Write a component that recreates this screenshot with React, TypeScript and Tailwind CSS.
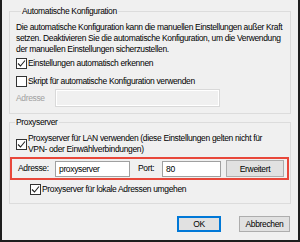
import React from 'react';

const Check: React.FC<{ checked?: boolean }> = ({ checked }) => (
    <span className="w-[11px] h-[11px] border border-[#333333] bg-white flex items-center justify-center shrink-0">
        {checked && (
            <svg width="9" height="9" viewBox="0 0 9 9">
                <path d="M1 4.5 L3.5 7 L8 1.5" fill="none" stroke="#222" strokeWidth="1.1" />
            </svg>
        )}
    </span>
);

const GroupBox: React.FC<{ title: string; className?: string; children: React.ReactNode }> = ({ title, className, children }) => (
    <fieldset className={`border border-[#dcdcdc] ${className ?? ''}`}>
        <legend className="ml-[5px] px-[1px] leading-[11px]">{title}</legend>
        {children}
    </fieldset>
);

const WinButton: React.FC<{ label: string; isDefault?: boolean; className?: string }> = ({ label, isDefault, className }) => (
    <button
        className={`h-[16px] bg-[#e1e1e1] border leading-[14px] text-center ${
            isDefault ? 'border-[#0078d7] shadow-[inset_0_0_0_1px_#0078d7]' : 'border-[#adadad]'
        } ${className ?? ''}`}
    >
        {label}
    </button>
);

export default function App() {
    return (
        <div className="w-[300px] h-[242px] bg-[#f0f0f0] border-l-2 border-r-2 border-b-2 border-[#1e1e1e] font-['Liberation_Sans',Arial,sans-serif] text-[8.5px] tracking-[-0.35px] text-black whitespace-nowrap pl-[7px] pr-[7px] pt-[6px] flex flex-col">
            <GroupBox title="Automatische Konfiguration" className="pl-[6px] pb-[6px]">
                <p className="mt-[5px] leading-[11px]">
                    Die automatische Konfiguration kann die manuellen Einstellungen außer Kraft
                    <br />
                    setzen. Deaktivieren Sie die automatische Konfiguration, um die Verwendung
                    <br />
                    der manuellen Einstellungen sicherzustellen.
                </p>
                <label className="mt-[2px] h-[12px] flex items-center gap-[1px]">
                    <Check checked />
                    <span>Einstellungen automatisch erkennen</span>
                </label>
                <label className="mt-[6px] h-[12px] flex items-center gap-[1px]">
                    <Check />
                    <span>Skript für automatische Konfiguration verwenden</span>
                </label>
                <div className="mt-[2px] flex items-center">
                    <span className="w-[39px] text-[#a0a0a0]">Adresse</span>
                    <div className="w-[165px] h-[18px] border border-[#d9d9d9] bg-[#f0f0f0] shadow-[inset_0_0_0_1px_#ffffff]" />
                </div>
            </GroupBox>

            <GroupBox title="Proxyserver" className="mt-[3px] pb-[8px]">
                <label className="mt-[5px] ml-[6px] flex items-center gap-[1px]">
                    <Check checked />
                    <span className="leading-[11px]">
                        Proxyserver für LAN verwenden (diese Einstellungen gelten nicht für
                        <br />
                        VPN- oder Einwählverbindungen)
                    </span>
                </label>
                <div className="mt-[2px] mr-[1px] h-[23px] border-2 border-[#e8473a] flex items-center pl-[6px]">
                    <span className="w-[37px]">Adresse:</span>
                    <div className="w-[75px] h-[16px] border border-[#a0a0a0] bg-white pl-[3px] leading-[14px]">proxyserver</div>
                    <span className="ml-[8px] w-[24px]">Port:</span>
                    <div className="w-[59px] h-[16px] border border-[#a0a0a0] bg-white pl-[3px] leading-[14px]">80</div>
                    <WinButton label="Erweitert" className="ml-[5px] w-[58px] h-[17px]" />
                </div>
                <label className="mt-[3px] ml-[20px] h-[12px] flex items-center gap-[1px]">
                    <Check checked />
                    <span>Proxyserver für lokale Adressen umgehen</span>
                </label>
            </GroupBox>

            <div className="mt-[12px] flex justify-end gap-[18px] pr-[1px]">
                <WinButton label="OK" isDefault className="w-[44px]" />
                <WinButton label="Abbrechen" className="w-[51px]" />
            </div>
        </div>
    );
}
